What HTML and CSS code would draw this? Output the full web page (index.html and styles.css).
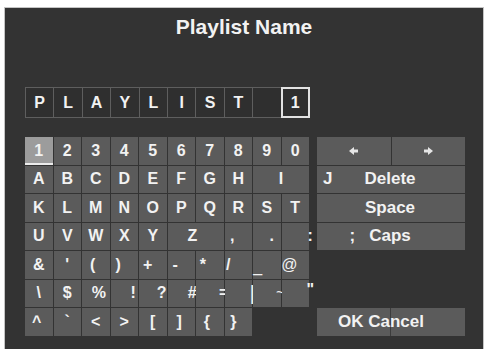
FILE: index.html
```html
<!DOCTYPE html>
<html lang="en">
<head>
  <meta charset="UTF-8">
  <meta name="viewport" content="width=device-width, initial-scale=1.0">
  <title>Playlist Name</title>
  <link rel="stylesheet" href="styles.css">
</head>
<body>
  <div class="panel">
    <h1 class="title">Playlist Name</h1>

    <div class="entry">
      <div class="cell">P</div>
      <div class="cell">L</div>
      <div class="cell">A</div>
      <div class="cell">Y</div>
      <div class="cell">L</div>
      <div class="cell">I</div>
      <div class="cell">S</div>
      <div class="cell">T</div>
      <div class="cell"></div>
      <div class="cell cursor">1</div>
    </div>

    <div class="keyboard">
      <!-- row 1 -->
      <div class="key active">1</div>
      <div class="key">2</div>
      <div class="key">3</div>
      <div class="key">4</div>
      <div class="key">5</div>
      <div class="key">6</div>
      <div class="key">7</div>
      <div class="key">8</div>
      <div class="key">9</div>
      <div class="key">0</div>
      <div class="key side left-col">
        <svg width="10" height="8" viewBox="0 0 10 8"><polygon points="0,4 5,0 5,8" fill="#e6e6e6"/><rect x="4" y="2.5" width="5" height="3" fill="#e6e6e6"/></svg>
      </div>
      <div class="key side">
        <svg width="10" height="8" viewBox="0 0 10 8"><polygon points="10,4 5,0 5,8" fill="#e6e6e6"/><rect x="1" y="2.5" width="5" height="3" fill="#e6e6e6"/></svg>
      </div>

      <!-- row 2 -->
      <div class="key">A</div>
      <div class="key">B</div>
      <div class="key">C</div>
      <div class="key">D</div>
      <div class="key">E</div>
      <div class="key">F</div>
      <div class="key">G</div>
      <div class="key">H</div>
      <div class="key span2">I</div>
      <div class="key wide">
        <span class="pre-j">J</span><span class="word">Delete</span><span></span>
      </div>

      <!-- row 3 -->
      <div class="key">K</div>
      <div class="key">L</div>
      <div class="key">M</div>
      <div class="key">N</div>
      <div class="key">O</div>
      <div class="key">P</div>
      <div class="key">Q</div>
      <div class="key">R</div>
      <div class="key">S</div>
      <div class="key">T</div>
      <div class="key wide">
        <span></span><span class="word">Space</span><span></span>
      </div>

      <!-- row 4 -->
      <div class="key">U</div>
      <div class="key">V</div>
      <div class="key">W</div>
      <div class="key">X</div>
      <div class="key">Y</div>
      <div class="key span2"><span class="l3">Z</span></div>
      <div class="key"><span class="l6">,</span></div>
      <div class="key"><span class="r5">.</span></div>
      <div class="key"><span class="r15">:</span></div>
      <div class="key wide">
        <span class="pre-semi">;</span><span class="word">Caps</span><span></span>
      </div>

      <!-- row 5 -->
      <div class="key first">&amp;</div>
      <div class="key">'</div>
      <div class="key"><span class="l3">(</span></div>
      <div class="key"><span class="l6">)</span></div>
      <div class="key"><span class="l5">+</span></div>
      <div class="key"><span class="l6">-</span></div>
      <div class="key"><span class="l7">*</span></div>
      <div class="key"><span class="l10">/</span></div>
      <div class="key"><span class="l9 under">_</span></div>
      <div class="key thin"><span class="l6">@</span></div>

      <!-- row 6 -->
      <div class="key first">\</div>
      <div class="key">$</div>
      <div class="key"><span class="r3">%</span></div>
      <div class="key"><span class="r9">!</span></div>
      <div class="key"><span class="r9">?</span></div>
      <div class="key"><span class="r11">#</span></div>
      <div class="key"><span class="r14">=</span></div>
      <div class="key thin"><span class="r14 bar">|</span></div>
      <div class="key thin"><span class="r14">~</span></div>
      <div class="key"><span class="r15 quote">"</span></div>

      <!-- row 7 -->
      <div class="key first"><span class="l2">^</span></div>
      <div class="key">`</div>
      <div class="key">&lt;</div>
      <div class="key">&gt;</div>
      <div class="key">[</div>
      <div class="key"><span class="l2">]</span></div>
      <div class="key"><span class="l3">{</span></div>
      <div class="key"><span class="l5">}</span></div>
      <div class="key okcancel">OK Cancel</div>
    </div>
  </div>
</body>
</html>
```

FILE: styles.css
```css
* {
  margin: 0;
  padding: 0;
  box-sizing: border-box;
}
body {
  background: #fff;
  font-family: "Liberation Sans", Arial, sans-serif;
  color: #f2f2f2;
}
.panel {
  margin: 8px 0 0 5px;
  width: 478px;
  height: 341px;
  background: #333;
  box-shadow: 0 0 0 1px #c4c4c4;
  padding: 7px 0 0 20px;
}
.title {
  font-size: 21px;
  line-height: 24px;
  font-weight: bold;
  text-align: center;
  margin-left: -20px;
}

/* name entry boxes */
.entry {
  margin-top: 48px;
  width: 285px;
  height: 31px;
  display: grid;
  grid-template-columns: repeat(10, 1fr);
  gap: 1px;
  padding: 1px;
  background: #5e5e5e;
}
.cell {
  background: #2f2f2f;
  display: flex;
  align-items: center;
  justify-content: center;
  font-size: 16px;
  font-weight: bold;
  padding-top: 1px;
}
.cursor {
  box-shadow: 0 0 0 1px #e2e2e2, inset 0 0 0 1px #e2e2e2;
}

/* keyboard */
.keyboard {
  margin-top: 19px;
  display: grid;
  grid-template-columns: repeat(10, 27.5px) 6px 73.5px 73.5px;
  grid-template-rows: repeat(7, 27.5px);
  gap: 1px;
}
.key {
  background: #5b5b5b;
  display: flex;
  align-items: center;
  justify-content: center;
  font-size: 16px;
  font-weight: bold;
  white-space: nowrap;
}
.key.first {
  grid-column-start: 1;
}
.key.active {
  background: #9c9c9c;
  box-shadow: inset 0 -2px 0 #ececec;
}
.key.thin {
  font-weight: normal;
}
.span2 {
  grid-column: span 2;
}
.left-col {
  grid-column-start: 12;
}
.wide {
  grid-column: 12 / span 2;
  display: grid;
  grid-template-columns: 1fr auto 1fr;
  font-size: 17px;
}
.wide .word {
  padding-right: 2px;
}
.pre-j {
  padding-left: 6px;
}
.pre-semi {
  text-align: right;
  padding-right: 14px;
}
.side {
  padding-top: 1px;
}
.okcancel {
  grid-column: 12 / span 2;
  justify-content: flex-start;
  padding-left: 21px;
  font-size: 17px;
  background: linear-gradient(to right, #5b5b5b 73.5px, #3c3c3c 73.5px, #3c3c3c 74.5px, #5b5b5b 74.5px);
}
.under {
  padding-top: 4px;
  font-weight: normal;
}
.quote {
  padding-bottom: 6px;
}
.bar {
  font-size: 21px;
}

/* label nudges: shift = margin / 2 */
.l2 { margin-right: 4px; }
.l3 { margin-right: 6px; }
.l5 { margin-right: 10px; }
.l6 { margin-right: 12px; }
.l7 { margin-right: 14px; }
.l9 { margin-right: 18px; }
.l10 { margin-right: 20px; }
.r3 { margin-left: 6px; }
.r5 { margin-left: 10px; }
.r9 { margin-left: 18px; }
.r11 { margin-left: 22px; }
.r14 { margin-left: 28px; }
.r15 { margin-left: 30px; }
```
